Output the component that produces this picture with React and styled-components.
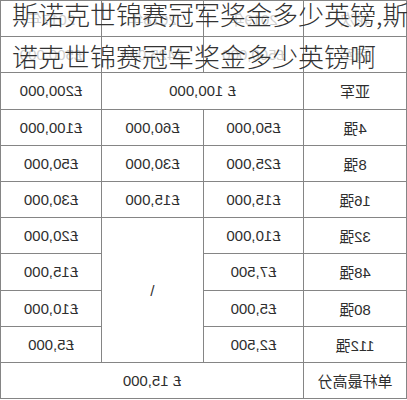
import styled, { createGlobalStyle } from "styled-components";

const GlobalStyle = createGlobalStyle`
  html, body {
    margin: 0;
    padding: 0;
    background: #fff;
  }
`;

const Page = styled.div`
  position: relative;
  width: 407px;
  height: 400px;
  overflow: hidden;
  background: #fff;
`;

// the screenshot shows the prize table flipped left-to-right
const PrizeTable = styled.table`
  width: 406px;
  table-layout: fixed;
  border-collapse: collapse;
  transform: scaleX(-1);
  font-family: "Liberation Sans", "Noto Sans CJK SC", sans-serif;
  font-size: 15px;
  color: #2e2e2e;
`;

const Row = styled.tr`
  height: 36.2px;
`;

const Cell = styled.td`
  border: 1px solid #858585;
  text-align: center;
  vertical-align: middle;
  padding: 0;
  white-space: nowrap;
  color: ${(p) => (p.$faint ? "#cfcfcf" : "#2e2e2e")};
`;

const Title = styled.h1`
  position: absolute;
  top: -7px;
  left: 12px;
  margin: 0;
  width: 420px;
  font-family: "Noto Sans CJK SC", "Noto Sans", sans-serif;
  font-weight: 300;
  font-size: 26px;
  line-height: 42px;
  color: #333;
  white-space: nowrap;
`;

const rows = [
  ["32强", "£10,000", "£20,000"],
  ["48强", "£7,500", "£15,000"],
  ["80强", "£5,000", "£10,000"],
  ["112强", "£2,500", "£5,000"],
];

const App = () => {
  return (
    <Page>
      <GlobalStyle />
      <PrizeTable>
        <colgroup>
          <col style={{ width: "103px" }} />
          <col style={{ width: "100px" }} />
          <col style={{ width: "102px" }} />
          <col style={{ width: "101px" }} />
        </colgroup>
        <tbody>
          <Row>
            <Cell $faint>轮次</Cell>
            <Cell $faint>2019年</Cell>
            <Cell $faint>2018年</Cell>
            <Cell $faint>2017年</Cell>
          </Row>
          <Row>
            <Cell $faint>冠军</Cell>
            <Cell $faint>£500,000</Cell>
            <Cell $faint>£425,000</Cell>
            <Cell $faint>£500,000</Cell>
          </Row>
          <Row>
            <Cell>亚军</Cell>
            <Cell colSpan={2}>£ 100,000</Cell>
            <Cell>£200,000</Cell>
          </Row>
          <Row>
            <Cell>4强</Cell>
            <Cell>£50,000</Cell>
            <Cell>£60,000</Cell>
            <Cell>£100,000</Cell>
          </Row>
          <Row>
            <Cell>8强</Cell>
            <Cell>£25,000</Cell>
            <Cell>£30,000</Cell>
            <Cell>£50,000</Cell>
          </Row>
          <Row>
            <Cell>16强</Cell>
            <Cell>£15,000</Cell>
            <Cell>£15,000</Cell>
            <Cell>£30,000</Cell>
          </Row>
          {rows.map((r, i) => (
            <Row key={r[0]}>
              <Cell>{r[0]}</Cell>
              <Cell>{r[1]}</Cell>
              {i === 0 ? <Cell rowSpan={4}>\</Cell> : null}
              <Cell>{r[2]}</Cell>
            </Row>
          ))}
          <Row>
            <Cell>单杆最高分</Cell>
            <Cell colSpan={3}>£ 15,000</Cell>
          </Row>
        </tbody>
      </PrizeTable>
      <Title>
        斯诺克世锦赛冠军奖金多少英镑,斯
        <br />
        诺克世锦赛冠军奖金多少英镑啊
      </Title>
    </Page>
  );
};

export default App;
